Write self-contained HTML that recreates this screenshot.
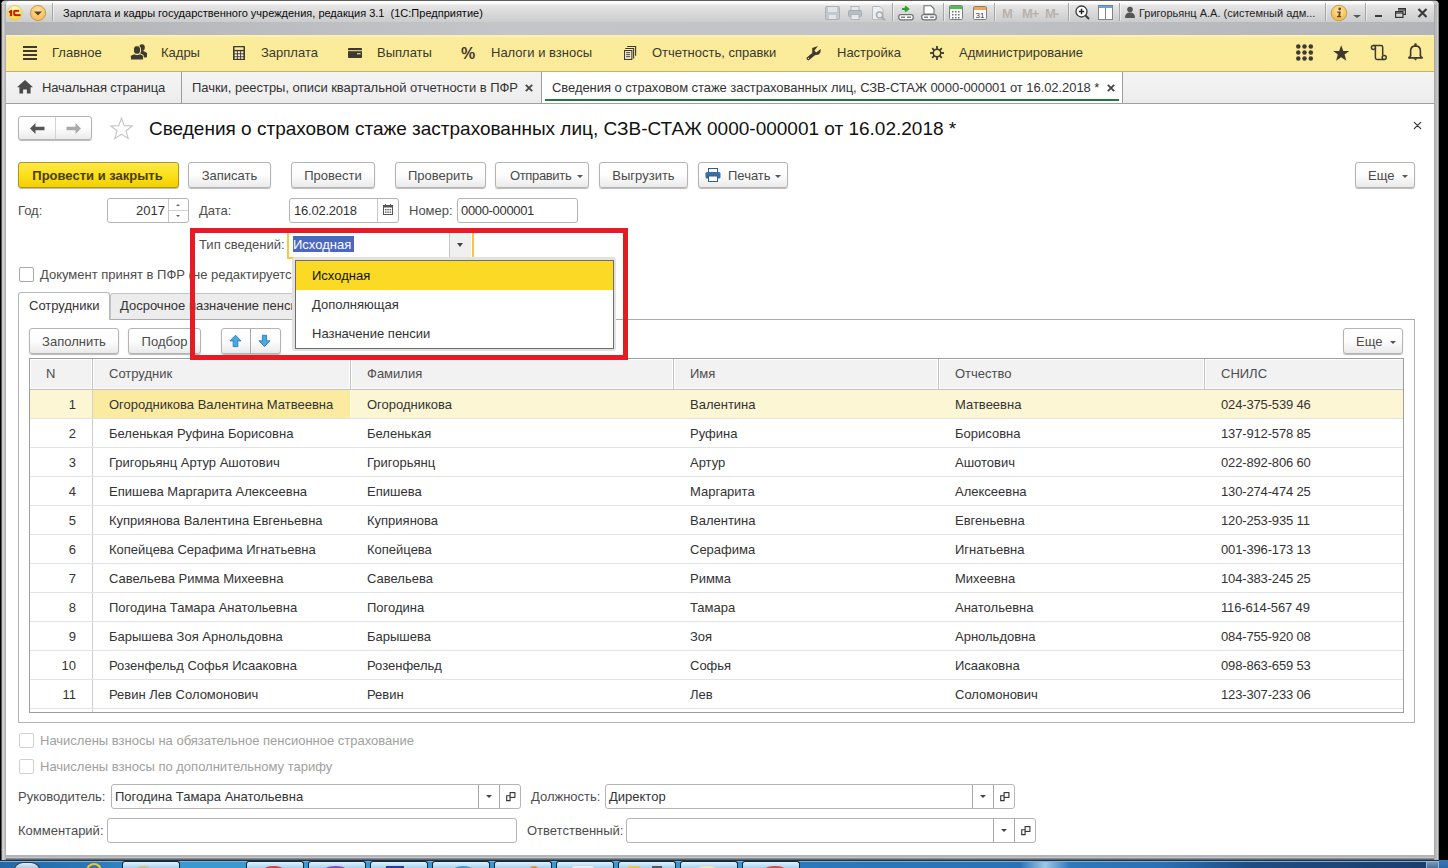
<!DOCTYPE html>
<html><head><meta charset="utf-8">
<style>
*{box-sizing:border-box;margin:0;padding:0}
html,body{width:1448px;height:868px;overflow:hidden;background:#000;font-family:"Liberation Sans",sans-serif;font-size:13px;color:#333}
.a{position:absolute}
#win{position:absolute;left:1px;top:0;width:1438px;height:860px;background:linear-gradient(#5e5e5e 0,#5e5e5e 1px,#c9cbce 1px);border-radius:5px 5px 0 0}
#tb{position:absolute;left:6px;top:1px;width:1428px;height:34px;background:linear-gradient(#fdfdfd 0,#fbfbfb 3px,#e6e6e6 4px,#d6d6d7 14px,#cbcccd 21px,#c6c7c9 22px,#c4c5c8 34px);border-radius:4px 4px 0 0}
#sec{position:absolute;left:6px;top:35px;width:1428px;height:37px;background:linear-gradient(#fcf2b8 0,#fcf2b8 1px,#fbec9c 2px,#faea99 36px);border-bottom:1px solid #c4b25c}
#tabs{position:absolute;left:6px;top:72px;width:1428px;height:32px;background:linear-gradient(#f4f4f4,#eeeeee 26px,#e9e9e9 31px);border-bottom:1px solid #a0a0a0}
#form{position:absolute;left:6px;top:104px;width:1428px;height:751px;background:#fff}
#task{position:absolute;left:0;top:860px;width:1448px;height:8px;background:linear-gradient(#3a78b8,#2a68a8)}
.t{position:absolute;white-space:nowrap;line-height:15px}
.sec{color:#3a3830;top:45px}
.ico{position:absolute}
.sep{position:absolute;top:3px;width:1px;height:18px;background:#a6a6a6;box-shadow:1px 0 0 rgba(255,255,255,.5)}
.tsep{position:absolute;top:72px;width:1px;height:31px;background:#9c9c9c}
.btn{position:absolute;height:26px;border:1px solid #b4b4b4;border-radius:3px;background:linear-gradient(#fff 0,#fdfdfd 50%,#eaeaea 100%);box-shadow:0 1px 1px rgba(0,0,0,.28);color:#4a4a4a;text-align:center;line-height:25px;white-space:nowrap}
.inp{position:absolute;height:25px;border:1px solid #b5b5b5;border-radius:3px;background:#fff;color:#333;line-height:22px;white-space:nowrap}
.lbl{position:absolute;color:#4d4d4d;white-space:nowrap;line-height:15px}
.dd{position:absolute;width:0;height:0;border-left:3px solid transparent;border-right:3px solid transparent;border-top:3px solid #555}
.cb{position:absolute;width:15px;height:15px;border:1px solid #a8a8a8;border-radius:2px;background:#fff}
table{border-collapse:collapse}
</style></head><body>
<div id="win"></div>
<div class="a" style="left:1px;top:4px;width:5px;height:856px;background:linear-gradient(90deg,#5a5a5a 0 1px,#c8c8c8 1px 2px,#d0d0d0 2px 3px,#c0c0c0 3px 4px,#b0b0b0 4px 5px)"></div>
<div class="a" style="left:1434px;top:4px;width:5px;height:856px;background:linear-gradient(90deg,#a9a9a9 0 1px,#b9b9b9 1px 3px,#cbccce 3px 4px,#8a8b8d 4px 5px)"></div>
<div class="a" style="left:6px;top:854px;width:1428px;height:6px;background:linear-gradient(#a0a0a0 0 1px,#b4b4b8 1px 3px,#c8c8cc 3px 4px,#8a8e92 4px 5px,#5a6670 5px 6px)"></div>
<div id="tb"></div>
<div class="a" style="left:6px;top:22px;width:1428px;height:13px;background:linear-gradient(90deg,#b0b2b5 0,#b6b7ba 100px,#c4c5c8 500px,#c2c3c6 900px,#b8b9bc 1250px,#b2b4b7 1428px)"></div>
<div id="sec"></div>
<div id="tabs"></div>
<div id="form"></div>
<div id="task">
<div class="a" style="left:0;top:0;width:1439px;height:1px;background:#1c3248"></div>
<div class="a" style="left:0;top:1px;width:1439px;height:1px;background:#7fb2da"></div>
<div class="a" style="left:0;top:2px;width:1439px;height:6px;background:linear-gradient(90deg,#2468a8 0,#2a78b8 90px,#3a98d0 180px,#3a9ad0 250px,#3a96cf 740px,#2c78bc 800px,#2a72b8 1020px,#9cc8e8 1045px,#2f78bc 1070px,#2a70b6 1160px,#1f4d84 1250px,#1b3d6c 1439px)"></div>
<div class="a" style="left:13px;top:2px;width:28px;height:10px;border-radius:14px 14px 0 0;background:linear-gradient(#e0ecf6,#9ab8d0);border:1px solid #1d3f66"></div>
<div class="a" style="left:86px;top:3px;width:16px;height:8px;border-radius:8px 8px 0 0;border:2px solid #f2c81c;border-bottom:none"></div>
<div class="a" style="left:122px;top:1px;width:58px;height:7px;border:1px solid #14283c;border-bottom:none;border-radius:3px 3px 0 0;background:linear-gradient(#e4f2fb,#a6d2ee)"></div>
<div class="a" style="left:246px;top:1px;width:58px;height:7px;border:1px solid #14283c;border-bottom:none;border-radius:3px 3px 0 0;background:linear-gradient(#e4f2fb,#a6d2ee)"></div>
<div class="a" style="left:308px;top:1px;width:58px;height:7px;border:1px solid #14283c;border-bottom:none;border-radius:3px 3px 0 0;background:linear-gradient(#e4f2fb,#a6d2ee)"></div>
<div class="a" style="left:370px;top:1px;width:58px;height:7px;border:1px solid #14283c;border-bottom:none;border-radius:3px 3px 0 0;background:linear-gradient(#e4f2fb,#a6d2ee)"></div>
<div class="a" style="left:432px;top:1px;width:58px;height:7px;border:1px solid #14283c;border-bottom:none;border-radius:3px 3px 0 0;background:linear-gradient(#e4f2fb,#a6d2ee)"></div>
<div class="a" style="left:494px;top:1px;width:58px;height:7px;border:1px solid #14283c;border-bottom:none;border-radius:3px 3px 0 0;background:linear-gradient(#e4f2fb,#a6d2ee)"></div>
<div class="a" style="left:556px;top:1px;width:58px;height:7px;border:1px solid #14283c;border-bottom:none;border-radius:3px 3px 0 0;background:linear-gradient(#e4f2fb,#a6d2ee)"></div>
<div class="a" style="left:618px;top:1px;width:58px;height:7px;border:1px solid #14283c;border-bottom:none;border-radius:3px 3px 0 0;background:linear-gradient(#e4f2fb,#a6d2ee)"></div>
<div class="a" style="left:680px;top:1px;width:58px;height:7px;border:1px solid #14283c;border-bottom:none;border-radius:3px 3px 0 0;background:linear-gradient(#e4f2fb,#a6d2ee)"></div>
<div class="a" style="left:742px;top:1px;width:58px;height:7px;border:1px solid #14283c;border-bottom:none;border-radius:3px 3px 0 0;background:linear-gradient(#e4f2fb,#a6d2ee)"></div>
<div class="a" style="left:137px;top:6px;width:13px;height:5px;background:#d4c27a;border-radius:50% 50% 0 0"></div>
<div class="a" style="left:265px;top:6px;width:17px;height:5px;background:#e03a30;border-radius:50% 50% 0 0"></div>
<div class="a" style="left:326px;top:6px;width:19px;height:5px;background:#8a48c8;border-radius:50% 50% 0 0"></div>
<div class="a" style="left:386px;top:6px;width:18px;height:5px;background:#2838a8;border-radius:0"></div>
<div class="a" style="left:455px;top:6px;width:16px;height:5px;background:#3a98d8;border-radius:50% 50% 0 0"></div>
<div class="a" style="left:530px;top:6px;width:8px;height:5px;background:#e89030;border-radius:50% 50% 0 0"></div>
<div class="a" style="left:572px;top:6px;width:22px;height:5px;background:#e8eef4;border-radius:3px 3px 0 0"></div>
<div class="a" style="left:628px;top:6px;width:12px;height:5px;background:#e8c850;border-radius:0"></div>
<div class="a" style="left:652px;top:6px;width:10px;height:5px;background:#505860;border-radius:0"></div>
<div class="a" style="left:698px;top:6px;width:18px;height:5px;background:#f2e6b0;border-radius:50% 50% 0 0"></div>
<div class="a" style="left:766px;top:6px;width:18px;height:5px;background:#d84848;border-radius:50% 50% 0 0"></div>
<div class="a" style="left:1426px;top:1px;width:13px;height:7px;border:1px solid #9ab4cc;border-bottom:none;background:linear-gradient(#7a98b8,#4a6e98)"></div>
</div>
<!-- TITLE BAR -->
<div id="titlebar">
<svg class="ico" style="left:6px;top:4px" width="18" height="18" viewBox="0 0 18 18"><defs><radialGradient id="g1" cx="50%" cy="30%" r="65%"><stop offset="0" stop-color="#fffbd0"/><stop offset=".55" stop-color="#fdf07a"/><stop offset="1" stop-color="#f5d820"/></radialGradient></defs><circle cx="8.9" cy="8.8" r="7.4" fill="url(#g1)" stroke="#d8c890" stroke-width=".9"/><path d="M3.0 7.4 L5.0 6.1 H6.0 V11.9 H4.1 V8.3 L3.0 8.7 Z" fill="#d21a08" stroke="#901400" stroke-width=".35"/><path d="M8.8 6.1 H12.2 Q13.1 6.1 13.1 7.0 Q13.1 7.8 12.2 7.8 H9.4 Q8.9 7.8 8.9 8.4 V9.6 Q8.9 10.3 9.5 10.3 H14.3 V11.9 H9.0 Q7.3 11.9 7.3 10.0 V8.0 Q7.3 6.1 8.8 6.1 Z" fill="#d21a08" stroke="#901400" stroke-width=".35"/></svg>
<svg class="ico" style="left:29px;top:4px" width="18" height="18" viewBox="0 0 18 18"><defs><radialGradient id="g2" cx="50%" cy="35%" r="65%"><stop offset="0" stop-color="#ffe3a8"/><stop offset="1" stop-color="#f6b74c"/></radialGradient></defs><circle cx="9" cy="9" r="7.6" fill="url(#g2)" stroke="#c39a58" stroke-width="1"/><path d="M5 7.5 L13 7.5 L9 11.5 Z" fill="#5a4020"/></svg>
<div class="sep" style="left:52px;top:3px;height:18px"></div>
<div class="t" style="left:63px;top:6px;font-size:11px;color:#0a0a0a;line-height:14px">Зарплата и кадры государственного учреждения, редакция 3.1&nbsp;&nbsp;(1С:Предприятие)</div>
<!-- toolbar icons -->
<svg class="ico" style="left:825px;top:6px" width="15" height="14" viewBox="0 0 15 14"><rect x=".5" y=".5" width="14" height="13" rx="1" fill="#c3c8cc" stroke="#aab0b5"/><rect x="3" y="1" width="9" height="5" fill="#e2e5e7"/><rect x="4" y="9" width="7" height="4" fill="#e2e5e7"/></svg>
<svg class="ico" style="left:848px;top:6px" width="14" height="14" viewBox="0 0 14 14"><rect x="3" y=".5" width="8" height="4" fill="#e6e8ea" stroke="#b0b5b9"/><rect x=".5" y="4.5" width="13" height="6" rx="1" fill="#b8bdc1" stroke="#a7acb0"/><rect x="3" y="8.5" width="8" height="5" fill="#e6e8ea" stroke="#b0b5b9"/></svg>
<svg class="ico" style="left:872px;top:6px" width="14" height="15" viewBox="0 0 14 15"><path d="M.5 .5 H8 L11 3.5 V13.5 H.5 Z" fill="#eceeef" stroke="#b5babe"/><circle cx="7.5" cy="9" r="3" fill="none" stroke="#a7acb0" stroke-width="1.5"/><path d="M9.5 11 L13 14.5" stroke="#a7acb0" stroke-width="2"/></svg>
<div class="sep" style="left:892px"></div>
<svg class="ico" style="left:898px;top:5px" width="16" height="16" viewBox="0 0 16 16"><path d="M4 4 H9 M7 1.5 L10 4 L7 6.5" fill="none" stroke="#2da52d" stroke-width="2.2"/><rect x=".8" y="9.6" width="14.4" height="5.2" rx="2" fill="#fff" stroke="#6d7275" stroke-width="1.3"/><rect x="3" y="11.5" width="4" height="1.5" fill="#7d8286"/><rect x="9" y="11.5" width="4" height="1.5" fill="#7d8286"/></svg>
<svg class="ico" style="left:921px;top:5px" width="16" height="16" viewBox="0 0 16 16"><path d="M3 .8 H10 L13 3.8 V9 H3 Z" fill="#fff" stroke="#6d7275" stroke-width="1.1"/><rect x=".8" y="9.6" width="14.4" height="5.2" rx="2" fill="#fff" stroke="#6d7275" stroke-width="1.3"/><rect x="3" y="11.5" width="4" height="1.5" fill="#7d8286"/><rect x="9" y="11.5" width="4" height="1.5" fill="#7d8286"/></svg>
<div class="sep" style="left:943px"></div>
<svg class="ico" style="left:949px;top:5px" width="14" height="15" viewBox="0 0 14 15"><rect x=".5" y=".5" width="13" height="14" rx="1" fill="#fbfbfb" stroke="#7a7f83"/><rect x="1" y="1" width="12" height="3" fill="#4cc04c"/><g fill="#6a6f73"><rect x="3" y="6" width="1.5" height="1.5"/><rect x="6" y="6" width="1.5" height="1.5"/><rect x="9" y="6" width="1.5" height="1.5"/><rect x="3" y="9" width="1.5" height="1.5"/><rect x="6" y="9" width="1.5" height="1.5"/><rect x="9" y="9" width="1.5" height="1.5"/><rect x="3" y="12" width="1.5" height="1.5"/><rect x="6" y="12" width="1.5" height="1.5"/><rect x="9" y="12" width="1.5" height="1.5"/></g></svg>
<svg class="ico" style="left:973px;top:5px" width="14" height="15" viewBox="0 0 14 15"><rect x=".5" y="1.5" width="13" height="13" rx="1" fill="#fbfbfb" stroke="#7a7f83"/><rect x="1" y="2" width="12" height="3" fill="#f0a35a"/><text x="7" y="13" font-size="8" font-family="Liberation Sans" text-anchor="middle" fill="#333">31</text></svg>
<div class="sep" style="left:994px"></div>
<div class="t" style="left:1002px;top:7px;font-size:13px;font-weight:bold;color:#b9b2ac;line-height:14px">M</div>
<div class="t" style="left:1022px;top:7px;font-size:13px;font-weight:bold;color:#b9b2ac;line-height:14px;letter-spacing:-1px">M+</div>
<div class="t" style="left:1045px;top:7px;font-size:13px;font-weight:bold;color:#b9b2ac;line-height:14px;letter-spacing:-1px">M-</div>
<div class="sep" style="left:1068px"></div>
<svg class="ico" style="left:1075px;top:5px" width="15" height="15" viewBox="0 0 15 15"><circle cx="6.5" cy="6.5" r="5.5" fill="#fff" stroke="#3a3a3a" stroke-width="1.3"/><path d="M6.5 3.8 V9.2 M3.8 6.5 H9.2" stroke="#222" stroke-width="1.5"/><path d="M10.5 10.5 L14 14" stroke="#3a3a3a" stroke-width="2"/></svg>
<svg class="ico" style="left:1098px;top:5px" width="15" height="15" viewBox="0 0 15 15"><rect x=".5" y=".5" width="14" height="14" fill="#fff" stroke="#7d8388"/><rect x="1" y="1" width="13" height="2" fill="#62a5e0"/><path d="M7.5 3 V14" stroke="#7d8388"/></svg>
<div class="sep" style="left:1119px"></div>
<svg class="ico" style="left:1125px;top:6px" width="10" height="12" viewBox="0 0 10 12"><circle cx="5" cy="3.5" r="2.8" fill="#555"/><path d="M0 12 Q0 6.5 5 6.5 Q10 6.5 10 12 Z" fill="#555"/></svg>
<div class="t" style="left:1139px;top:6px;font-size:11px;color:#1e1e1e;line-height:14px">Григорьянц А.А. (системный адм...</div>
<div class="sep" style="left:1325px"></div>
<svg class="ico" style="left:1330px;top:4px" width="18" height="18" viewBox="0 0 18 18"><defs><radialGradient id="g3" cx="50%" cy="35%" r="65%"><stop offset="0" stop-color="#ffe8a8"/><stop offset="1" stop-color="#f4b43e"/></radialGradient></defs><circle cx="9" cy="9" r="7.8" fill="url(#g3)" stroke="#c9a050"/><circle cx="9.7" cy="5" r="1.4" fill="#5e4a22"/><path d="M7.2 7.4 H10.8 L10.1 11.9 H11.2 L10.9 13.2 H6.9 L7.2 11.9 H8.3 L8.8 8.7 H7 Z" fill="#5e4a22"/></svg>
<div class="a" style="left:1353px;top:15px;width:0;height:0;border-left:4px solid transparent;border-right:4px solid transparent;border-top:3px solid #555"></div>
<div class="sep" style="left:1365px"></div>
<div class="a" style="left:1375px;top:15px;width:7px;height:2px;background:#3a3a3a"></div>
<svg class="ico" style="left:1395px;top:8px" width="11" height="10" viewBox="0 0 11 10"><path d="M3 .6 H10.4 V6.4 H8" fill="none" stroke="#333" stroke-width="1.2"/><path d="M3 2 H10" stroke="#333" stroke-width="1.2"/><rect x=".6" y="3.6" width="7.4" height="5.8" fill="none" stroke="#333" stroke-width="1.2"/><path d="M1 5 H8" stroke="#333" stroke-width="1.2"/></svg>
<svg class="ico" style="left:1417px;top:8px" width="11" height="10" viewBox="0 0 11 10"><path d="M1.5 1 L9.5 9 M9.5 1 L1.5 9" stroke="#383838" stroke-width="2.1"/></svg>
</div>

<!-- SECTION PANEL -->
<div id="secpanel">
<svg class="ico" style="left:23px;top:46px" width="14" height="14" viewBox="0 0 14 14"><g fill="#3f3a30"><rect y="0" width="14" height="2"/><rect y="4" width="14" height="2"/><rect y="8" width="14" height="2"/><rect y="12" width="14" height="2"/></g></svg>
<div class="t sec" style="left:52px">Главное</div>
<svg class="ico" style="left:130px;top:44px" width="18" height="17" viewBox="0 0 18 17"><g fill="#3f3a30"><ellipse cx="12" cy="3.6" rx="2.8" ry="3.4"/><path d="M10 8 Q10.5 6.8 12 6.8 Q13.5 6.8 14.5 7.6 L17 9 V12.8 Q17 13.6 16 13.6 H10 Z"/><ellipse cx="7" cy="6" rx="3.6" ry="4.3" stroke="#fbed9e" stroke-width="1"/><path d="M1 11.2 L4 9.8 Q5.2 10.6 7 10.6 Q8.8 10.6 10 9.8 L13 11.2 Q13.6 11.6 13.6 12.4 V16 H.4 V12.4 Q.4 11.6 1 11.2 Z" stroke="#fbed9e" stroke-width="1"/></g></svg>
<div class="t sec" style="left:161px">Кадры</div>
<svg class="ico" style="left:233px;top:46px" width="12" height="14" viewBox="0 0 12 14"><rect x="0" y="0" width="12" height="14" rx=".5" fill="#3f3a30"/><rect x="1.5" y="1.3" width="9" height="2.6" fill="#fbed9e"/><g fill="#fff6d0"><rect x="1.6" y="5.3" width="2.3" height="2"/><rect x="4.85" y="5.3" width="2.3" height="2"/><rect x="8.1" y="5.3" width="2.3" height="2"/><rect x="1.6" y="8.3" width="2.3" height="2"/><rect x="4.85" y="8.3" width="2.3" height="2"/><rect x="8.1" y="8.3" width="2.3" height="2"/><rect x="1.6" y="11.2" width="2.3" height="1.6"/><rect x="4.85" y="11.2" width="2.3" height="1.6"/><rect x="8.1" y="11.2" width="2.3" height="1.6"/></g></svg>
<div class="t sec" style="left:261px">Зарплата</div>
<svg class="ico" style="left:348px;top:48px" width="14" height="10" viewBox="0 0 14 10"><rect width="14" height="10" rx=".8" fill="#3f3a30"/><rect y="2.2" width="14" height="1" fill="#fbed9e"/><rect x="9" y="5.2" width="3.6" height="1.1" fill="#fbed9e"/></svg>
<div class="t sec" style="left:377px">Выплаты</div>
<div class="t sec" style="left:461px;top:45px;font-size:16px;font-weight:bold;color:#3f3a30;line-height:17px">%</div>
<div class="t sec" style="left:491px">Налоги и взносы</div>
<svg class="ico" style="left:624px;top:46px" width="13" height="14" viewBox="0 0 13 14"><g fill="none" stroke="#3f3a30" stroke-width="1.1"><path d="M3.2 .55 H11.6 V9.7"/><path d="M1.2 2.55 H9.6 V12.6"/><rect x=".55" y="4.55" width="7.3" height="8.9" fill="#fff8d8"/></g><g fill="#3f3a30"><rect x="2.1" y="6.2" width="4.1" height="1"/><rect x="2.1" y="8.2" width="4.1" height="1"/><rect x="2.1" y="10.2" width="4.1" height="1"/></g></svg>
<div class="t sec" style="left:652px">Отчетность, справки</div>
<svg class="ico" style="left:806px;top:45px" width="15" height="16" viewBox="0 0 15 16"><path d="M.5 12.8 L6.2 8 L6.2 3 L12 1.1 L8.4 5.4 L10.2 7.4 L14.7 4.1 L14.5 7.2 L12.8 9.6 L8.9 10.2 L2.9 15.2 Q.2 15.6 .5 12.8 Z" fill="#3f3a30"/><circle cx="2.4" cy="13.3" r=".6" fill="#fff8d0"/></svg>
<div class="t sec" style="left:837px">Настройка</div>
<svg class="ico" style="left:930px;top:46px" width="14" height="14" viewBox="0 0 14 14"><g transform="translate(7 7)" fill="#3f3a30"><circle r="3.75" fill="none" stroke="#3f3a30" stroke-width="1.5"/><rect x="-.9" y="-7" width="1.8" height="3.6"/><rect x="-.9" y="3.4" width="1.8" height="3.6"/><rect x="-7" y="-.9" width="3.6" height="1.8"/><rect x="3.4" y="-.9" width="3.6" height="1.8"/><g transform="rotate(45)"><rect x="-.9" y="-6.8" width="1.8" height="3.4"/><rect x="-.9" y="3.4" width="1.8" height="3.4"/><rect x="-6.8" y="-.9" width="3.4" height="1.8"/><rect x="3.4" y="-.9" width="3.4" height="1.8"/></g></g></svg>
<div class="t sec" style="left:959px">Администрирование</div>
<svg class="ico" style="left:1295px;top:44px" width="19" height="17" viewBox="0 0 19 17"><g fill="#3f3a30"><circle cx="3.3" cy="2.6" r="2.25"/><circle cx="9.5" cy="2.6" r="2.25"/><circle cx="15.8" cy="2.6" r="2.25"/><circle cx="3.3" cy="8.6" r="2.25"/><circle cx="9.5" cy="8.6" r="2.25"/><circle cx="15.8" cy="8.6" r="2.25"/><circle cx="3.3" cy="14.6" r="2.25"/><circle cx="9.5" cy="14.6" r="2.25"/><circle cx="15.8" cy="14.6" r="2.25"/></g></svg>
<svg class="ico" style="left:1333px;top:45px" width="17" height="16" viewBox="0 0 17 16"><path d="M8.2 .3 L10.3 5.9 L16.2 6 L11.6 9.6 L13.3 15.7 L8.2 12.2 L3.1 15.7 L4.8 9.6 L.2 6 L6.1 5.9 Z" fill="#3f3a30"/></svg>
<svg class="ico" style="left:1370px;top:44px" width="18" height="17" viewBox="0 0 18 17"><g fill="none" stroke="#3f3a30" stroke-width="1.5"><circle cx="3.4" cy="3.4" r="2"/><circle cx="14.2" cy="13.4" r="2"/><path d="M3.4 1.4 H11 Q12.7 1.4 12.7 3.1 V11.4"/><path d="M5.4 3.4 V13.7 Q5.4 15.4 7.1 15.4 H14.2"/></g></svg>
<svg class="ico" style="left:1407px;top:43px" width="17" height="18" viewBox="0 0 17 18"><g fill="none" stroke="#3f3a30" stroke-width="1.6"><path d="M3.6 13.3 V8 Q3.6 3.1 8.5 2.9 Q13.4 3.1 13.4 8 V13.3"/><path d="M1.2 14.8 Q3.6 14 3.6 12.4 M15.8 14.8 Q13.4 14 13.4 12.4 M1.2 14.9 H15.8"/></g><circle cx="8.5" cy="1.6" r="1.3" fill="#3f3a30"/><path d="M6.6 15.4 H10.4 L8.5 17.6 Z" fill="#3f3a30"/></svg>
</div>
<!-- TABS -->
<div id="tabsrow">
<svg class="ico" style="left:17px;top:80px" width="16" height="14" viewBox="0 0 16 14"><path d="M8 0 L16 7.3 H13.6 V13.5 H9.9 V9.5 H6.1 V13.5 H2.4 V7.3 H0 Z" fill="#4a4a4a"/></svg>
<div class="t" style="left:42px;top:80px;color:#333;letter-spacing:-.15px">Начальная страница</div>
<div class="tsep" style="left:181px"></div>
<div class="t" style="left:192px;top:80px;color:#333;letter-spacing:-.04px">Пачки, реестры, описи квартальной отчетности в ПФР</div>
<svg class="ico" style="left:525px;top:84px" width="8" height="8" viewBox="0 0 8 8"><path d="M.8 .8 L7.2 7.2 M7.2 .8 L.8 7.2" stroke="#444" stroke-width="1.8"/></svg>
<div class="tsep" style="left:541px"></div>
<div class="a" style="left:542px;top:72px;width:580px;height:31px;background:#fff"></div>
<div class="t" style="left:552px;top:80px;color:#333;letter-spacing:-.06px">Сведения о страховом стаже застрахованных лиц, СЗВ-СТАЖ 0000-000001 от 16.02.2018 *</div>
<svg class="ico" style="left:1107px;top:84px" width="8" height="8" viewBox="0 0 8 8"><path d="M.8 .8 L7.2 7.2 M7.2 .8 L.8 7.2" stroke="#444" stroke-width="1.8"/></svg>
<div class="a" style="left:545px;top:99px;width:574px;height:2px;background:#1e7a3e"></div>
<div class="tsep" style="left:1122px"></div>
</div>

<!-- FORM -->
<div id="formc">
<!-- nav -->
<div class="btn" style="left:18px;top:116px;width:74px;height:24px"></div>
<div class="a" style="left:55px;top:117px;width:1px;height:22px;background:#d4d4d4"></div>
<svg class="ico" style="left:30px;top:123px" width="15" height="11" viewBox="0 0 15 11"><path d="M0 5.5 L5.5 0 V3.8 H14.5 V7.2 H5.5 V11 Z" fill="#555"/></svg>
<svg class="ico" style="left:66px;top:123px" width="15" height="11" viewBox="0 0 15 11"><path d="M15 5.5 L9.5 0 V3.8 H.5 V7.2 H9.5 V11 Z" fill="#a9a9a9"/></svg>
<svg class="ico" style="left:109px;top:117px" width="25" height="23" viewBox="0 0 25 23"><path d="M12.5 1.2 L15.3 8.6 L23.3 8.9 L17 13.8 L19.2 21.6 L12.5 17.2 L5.8 21.6 L8 13.8 L1.7 8.9 L9.7 8.6 Z" fill="#fff" stroke="#c4c4c4" stroke-width="1.1"/></svg>
<div class="t" style="left:149px;top:118px;font-size:19px;line-height:22px;color:#111">Сведения о страховом стаже застрахованных лиц, СЗВ-СТАЖ 0000-000001 от 16.02.2018 *</div>
<svg class="ico" style="left:1413px;top:121px" width="9" height="9" viewBox="0 0 9 9"><path d="M1.3 1.3 L7.7 7.7 M7.7 1.3 L1.3 7.7" stroke="#333" stroke-width="1.2" stroke-linecap="round"/></svg>

<!-- command bar -->
<div class="btn" style="left:18px;top:162px;width:161px;border-color:#ac961c;background:linear-gradient(#fee84a,#fbe01a 50%,#f3d000);color:#4a3c00;font-weight:bold;padding-right:2px">Провести и закрыть</div>
<div class="btn" style="left:188px;top:162px;width:83px">Записать</div>
<div class="btn" style="left:291px;top:162px;width:84px">Провести</div>
<div class="btn" style="left:395px;top:162px;width:91px">Проверить</div>
<div class="btn" style="left:495px;top:162px;width:94px;text-align:left;padding-left:14px;letter-spacing:-.35px">Отправить</div>
<div class="dd" style="left:577px;top:175px"></div>
<div class="btn" style="left:599px;top:162px;width:89px">Выгрузить</div>
<div class="btn" style="left:698px;top:162px;width:90px;text-align:left;padding-left:29px">Печать</div>
<svg class="ico" style="left:705px;top:168px" width="16" height="14" viewBox="0 0 16 14"><rect x="3.5" y=".5" width="9" height="4" fill="#fff" stroke="#2f5f8f"/><rect x=".5" y="4" width="15" height="6.5" rx="1.5" fill="#3a6ea5"/><rect x="3.5" y="8" width="9" height="5.5" fill="#fff" stroke="#2f5f8f"/></svg>
<div class="dd" style="left:775px;top:175px"></div>
<div class="btn" style="left:1355px;top:162px;width:60px;text-align:left;padding-left:12px">Еще</div>
<div class="dd" style="left:1402px;top:175px"></div>

<!-- fields row -->
<div class="lbl" style="left:18px;top:203px">Год:</div>
<div class="inp" style="left:107px;top:198px;width:82px;height:25px"></div>
<div class="t" style="left:136px;top:203px;color:#333">2017</div>
<div class="a" style="left:168px;top:199px;width:1px;height:23px;background:#c8c8c8"></div>
<div class="a" style="left:169px;top:210px;width:19px;height:1px;background:#d0d0d0"></div>
<div class="a" style="left:176px;top:204px;width:0;height:0;border-left:2px solid transparent;border-right:2px solid transparent;border-bottom:2px solid #666"></div>
<div class="a" style="left:176px;top:215px;width:0;height:0;border-left:2px solid transparent;border-right:2px solid transparent;border-top:2px solid #666"></div>
<div class="lbl" style="left:199px;top:203px">Дата:</div>
<div class="inp" style="left:289px;top:198px;width:110px;height:25px"></div>
<div class="t" style="left:294px;top:203px;color:#333;letter-spacing:-.22px">16.02.2018</div>
<div class="a" style="left:377px;top:199px;width:1px;height:23px;background:#c8c8c8"></div>
<svg class="ico" style="left:383px;top:204px" width="10" height="11" viewBox="0 0 10 11"><rect x=".5" y="1.5" width="9" height="9" fill="none" stroke="#555"/><rect x=".5" y="1.5" width="9" height="2" fill="#555"/><path d="M2.5 0 V2 M7.5 0 V2" stroke="#555"/><g fill="#555"><rect x="2" y="5" width="1.5" height="1.3"/><rect x="4.3" y="5" width="1.5" height="1.3"/><rect x="6.6" y="5" width="1.5" height="1.3"/><rect x="2" y="7.5" width="1.5" height="1.3"/><rect x="4.3" y="7.5" width="1.5" height="1.3"/><rect x="6.6" y="7.5" width="1.5" height="1.3"/></g></svg>
<div class="lbl" style="left:409px;top:203px">Номер:</div>
<div class="inp" style="left:457px;top:198px;width:121px;height:25px"></div>
<div class="t" style="left:461px;top:203px;color:#333;letter-spacing:-.33px">0000-000001</div>

<!-- tip svedeniy -->
<div class="lbl" style="left:199px;top:237px">Тип сведений:</div>
<div class="a" style="left:287px;top:233px;width:187px;height:26px;border-left:2px solid #f4c842;border-right:2px solid #f4c842;border-bottom:2px solid #f4c842;background:#fff"></div>
<div class="a" style="left:293px;top:236px;width:61px;height:16px;background:#4c67c2"></div>
<div class="t" style="left:293px;top:237px;color:#fff">Исходная</div>
<div class="a" style="left:449px;top:233px;width:22px;height:24px;background:#f0f0f0;border-left:1px solid #c8c8c8"></div>
<div class="dd" style="left:457px;top:243px;border-left-width:3.5px;border-right-width:3.5px;border-top-width:4px;border-top-color:#444"></div>

<!-- checkbox -->
<div class="cb" style="left:19px;top:267px"></div>
<div class="lbl" style="left:40px;top:267px">Документ принят в ПФР (не редактируется)</div>

<!-- tabs panel -->
<div class="a" style="left:18px;top:319px;width:1397px;height:404px;border:1px solid #b4b4b4;border-top-color:#ababab"></div>
<div class="a" style="left:110px;top:293px;width:205px;height:27px;background:#ececec;border:1px solid #c4c4c4;border-bottom:1px solid #ababab;border-radius:3px 3px 0 0"></div>
<div class="a" style="left:18px;top:292px;width:92px;height:28px;background:#fff;border:1px solid #b8b8b8;border-bottom:none;border-radius:3px 3px 0 0"></div>
<div class="t" style="left:29px;top:298px;color:#333">Сотрудники</div>
<div class="t" style="left:120px;top:298px;color:#333">Досрочное назначение пенсии</div>

<!-- table toolbar -->
<div class="btn" style="left:29px;top:328px;width:90px">Заполнить</div>
<div class="btn" style="left:128px;top:328px;width:73px">Подбор</div>
<div class="btn" style="left:221px;top:328px;width:60px"></div>
<div class="a" style="left:250px;top:328px;width:1px;height:26px;background:#a8a8a8"></div>
<svg class="ico" style="left:229px;top:334px" width="13" height="14" viewBox="0 0 13 14"><path d="M6.5 1.2 L12 6.9 H8.8 V12.6 H4.2 V6.9 H1 Z" fill="#4aa8e0" stroke="#2c7ab4" stroke-width=".9" stroke-linejoin="miter"/></svg>
<svg class="ico" style="left:258px;top:334px" width="13" height="14" viewBox="0 0 13 14"><path d="M6.5 12.6 L12 6.8 H8.6 V1.3 H4.4 V6.8 H1 Z" fill="#4aa8e0" stroke="#2c7ab4" stroke-width=".9" stroke-linejoin="miter"/></svg>
<div class="btn" style="left:1343px;top:328px;width:60px;text-align:left;padding-left:12px">Еще</div>
<div class="dd" style="left:1390px;top:341px"></div>

<!-- bottom -->
<div class="cb" style="left:19px;top:733px;border-color:#d0d0d0"></div>
<div class="lbl" style="left:40px;top:733px;color:#a0a0a0">Начислены взносы на обязательное пенсионное страхование</div>
<div class="cb" style="left:19px;top:759px;border-color:#d0d0d0"></div>
<div class="lbl" style="left:40px;top:759px;color:#a0a0a0">Начислены взносы по дополнительному тарифу</div>
<div class="lbl" style="left:18px;top:789px">Руководитель:</div>
<div class="inp" style="left:111px;top:784px;width:410px;height:25px"></div>
<div class="t" style="left:115px;top:789px;color:#333">Погодина Тамара Анатольевна</div>
<div class="a" style="left:478px;top:785px;width:1px;height:23px;background:#a8a8a8"></div>
<div class="dd" style="left:486px;top:795px;border-top-color:#444"></div>
<div class="a" style="left:499px;top:785px;width:1px;height:23px;background:#a8a8a8"></div>
<svg class="ico" style="left:506px;top:792px" width="10" height="10" viewBox="0 0 10 10"><g fill="none" stroke="#333" stroke-width="1.1"><rect x="4.1" y=".6" width="4.8" height="4.8"/><path d="M4.1 3.8 H.7 V8.6 H4.1 V5.4"/></g></svg>
<div class="lbl" style="left:531px;top:789px">Должность:</div>
<div class="inp" style="left:605px;top:784px;width:410px;height:25px"></div>
<div class="t" style="left:609px;top:789px;color:#333">Директор</div>
<div class="a" style="left:972px;top:785px;width:1px;height:23px;background:#a8a8a8"></div>
<div class="dd" style="left:980px;top:795px;border-top-color:#444"></div>
<div class="a" style="left:993px;top:785px;width:1px;height:23px;background:#a8a8a8"></div>
<svg class="ico" style="left:1000px;top:792px" width="10" height="10" viewBox="0 0 10 10"><g fill="none" stroke="#333" stroke-width="1.1"><rect x="4.1" y=".6" width="4.8" height="4.8"/><path d="M4.1 3.8 H.7 V8.6 H4.1 V5.4"/></g></svg>
<div class="lbl" style="left:18px;top:823px">Комментарий:</div>
<div class="inp" style="left:107px;top:818px;width:410px;height:25px"></div>
<div class="lbl" style="left:527px;top:823px">Ответственный:</div>
<div class="inp" style="left:626px;top:818px;width:410px;height:25px"></div>
<div class="a" style="left:993px;top:819px;width:1px;height:23px;background:#a8a8a8"></div>
<div class="dd" style="left:1001px;top:829px;border-top-color:#444"></div>
<div class="a" style="left:1014px;top:819px;width:1px;height:23px;background:#a8a8a8"></div>
<svg class="ico" style="left:1021px;top:826px" width="10" height="10" viewBox="0 0 10 10"><g fill="none" stroke="#333" stroke-width="1.1"><rect x="4.1" y=".6" width="4.8" height="4.8"/><path d="M4.1 3.8 H.7 V8.6 H4.1 V5.4"/></g></svg>

<!-- table -->
<div id="grid">
<div class="a" style="left:29px;top:358px;width:1375px;height:355px;border:1px solid #9e9e9e;background:#fff"></div>
<div class="a" style="left:30px;top:359px;width:1373px;height:31px;background:#f2f2f2;border-bottom:1px solid #c4c4c4"></div>
<div class="a" style="left:30px;top:390px;width:1373px;height:28px;background:#fcf6d4"></div>
<div class="a" style="left:93px;top:390px;width:257px;height:28px;background:#fbeba0"></div>
<div class="t" style="left:46px;top:366px;color:#4d4d4d">N</div>
<div class="t" style="left:109px;top:366px;color:#4d4d4d">Сотрудник</div>
<div class="t" style="left:367px;top:366px;color:#4d4d4d">Фамилия</div>
<div class="t" style="left:690px;top:366px;color:#4d4d4d">Имя</div>
<div class="t" style="left:955px;top:366px;color:#4d4d4d">Отчество</div>
<div class="t" style="left:1221px;top:366px;color:#4d4d4d">СНИЛС</div>
<div class="a" style="left:30px;top:359px;width:1373px;height:1px;background:#fff"></div>
<div class="a" style="left:30px;top:388px;width:1373px;height:1px;background:#fafafa"></div>
<div class="a" style="left:30px;top:359px;width:1px;height:30px;background:#fff"></div>
<div class="a" style="left:91px;top:359px;width:3px;height:30px;background:#fff"></div>
<div class="a" style="left:92px;top:359px;width:1px;height:30px;background:#c4c4c4"></div>
<div class="a" style="left:349px;top:359px;width:3px;height:30px;background:#fff"></div>
<div class="a" style="left:350px;top:359px;width:1px;height:30px;background:#c4c4c4"></div>
<div class="a" style="left:672px;top:359px;width:3px;height:30px;background:#fff"></div>
<div class="a" style="left:673px;top:359px;width:1px;height:30px;background:#c4c4c4"></div>
<div class="a" style="left:937px;top:359px;width:3px;height:30px;background:#fff"></div>
<div class="a" style="left:938px;top:359px;width:1px;height:30px;background:#c4c4c4"></div>
<div class="a" style="left:1203px;top:359px;width:3px;height:30px;background:#fff"></div>
<div class="a" style="left:1204px;top:359px;width:1px;height:30px;background:#c4c4c4"></div>
<div class="a" style="left:92px;top:389px;width:1px;height:323px;background:#cfcfcf"></div>
<div class="a" style="left:350px;top:390px;width:1px;height:28px;background:#fffbea"></div>
<div class="a" style="left:30px;top:418px;width:1373px;height:1px;background:#e3e3e3"></div>
<div class="a" style="left:30px;top:447px;width:1373px;height:1px;background:#e3e3e3"></div>
<div class="a" style="left:30px;top:476px;width:1373px;height:1px;background:#e3e3e3"></div>
<div class="a" style="left:30px;top:505px;width:1373px;height:1px;background:#e3e3e3"></div>
<div class="a" style="left:30px;top:534px;width:1373px;height:1px;background:#e3e3e3"></div>
<div class="a" style="left:30px;top:563px;width:1373px;height:1px;background:#e3e3e3"></div>
<div class="a" style="left:30px;top:592px;width:1373px;height:1px;background:#e3e3e3"></div>
<div class="a" style="left:30px;top:621px;width:1373px;height:1px;background:#e3e3e3"></div>
<div class="a" style="left:30px;top:650px;width:1373px;height:1px;background:#e3e3e3"></div>
<div class="a" style="left:30px;top:679px;width:1373px;height:1px;background:#e3e3e3"></div>
<div class="a" style="left:30px;top:708px;width:1373px;height:1px;background:#e3e3e3"></div>
<div class="t" style="right:1372px;top:397px;color:#333">1</div>
<div class="t" style="left:109px;top:397px;color:#333">Огородникова Валентина Матвеевна</div>
<div class="t" style="left:367px;top:397px;color:#333">Огородникова</div>
<div class="t" style="left:690px;top:397px;color:#333">Валентина</div>
<div class="t" style="left:955px;top:397px;color:#333">Матвеевна</div>
<div class="t" style="left:1221px;top:397px;color:#333;letter-spacing:-.15px">024-375-539 46</div>
<div class="t" style="right:1372px;top:426px;color:#333">2</div>
<div class="t" style="left:109px;top:426px;color:#333">Беленькая Руфина Борисовна</div>
<div class="t" style="left:367px;top:426px;color:#333">Беленькая</div>
<div class="t" style="left:690px;top:426px;color:#333">Руфина</div>
<div class="t" style="left:955px;top:426px;color:#333">Борисовна</div>
<div class="t" style="left:1221px;top:426px;color:#333;letter-spacing:-.15px">137-912-578 85</div>
<div class="t" style="right:1372px;top:455px;color:#333">3</div>
<div class="t" style="left:109px;top:455px;color:#333">Григорьянц Артур Ашотович</div>
<div class="t" style="left:367px;top:455px;color:#333">Григорьянц</div>
<div class="t" style="left:690px;top:455px;color:#333">Артур</div>
<div class="t" style="left:955px;top:455px;color:#333">Ашотович</div>
<div class="t" style="left:1221px;top:455px;color:#333;letter-spacing:-.15px">022-892-806 60</div>
<div class="t" style="right:1372px;top:484px;color:#333">4</div>
<div class="t" style="left:109px;top:484px;color:#333">Епишева Маргарита Алексеевна</div>
<div class="t" style="left:367px;top:484px;color:#333">Епишева</div>
<div class="t" style="left:690px;top:484px;color:#333">Маргарита</div>
<div class="t" style="left:955px;top:484px;color:#333">Алексеевна</div>
<div class="t" style="left:1221px;top:484px;color:#333;letter-spacing:-.15px">130-274-474 25</div>
<div class="t" style="right:1372px;top:513px;color:#333">5</div>
<div class="t" style="left:109px;top:513px;color:#333">Куприянова Валентина Евгеньевна</div>
<div class="t" style="left:367px;top:513px;color:#333">Куприянова</div>
<div class="t" style="left:690px;top:513px;color:#333">Валентина</div>
<div class="t" style="left:955px;top:513px;color:#333">Евгеньевна</div>
<div class="t" style="left:1221px;top:513px;color:#333;letter-spacing:-.15px">120-253-935 11</div>
<div class="t" style="right:1372px;top:542px;color:#333">6</div>
<div class="t" style="left:109px;top:542px;color:#333">Копейцева Серафима Игнатьевна</div>
<div class="t" style="left:367px;top:542px;color:#333">Копейцева</div>
<div class="t" style="left:690px;top:542px;color:#333">Серафима</div>
<div class="t" style="left:955px;top:542px;color:#333">Игнатьевна</div>
<div class="t" style="left:1221px;top:542px;color:#333;letter-spacing:-.15px">001-396-173 13</div>
<div class="t" style="right:1372px;top:571px;color:#333">7</div>
<div class="t" style="left:109px;top:571px;color:#333">Савельева Римма Михеевна</div>
<div class="t" style="left:367px;top:571px;color:#333">Савельева</div>
<div class="t" style="left:690px;top:571px;color:#333">Римма</div>
<div class="t" style="left:955px;top:571px;color:#333">Михеевна</div>
<div class="t" style="left:1221px;top:571px;color:#333;letter-spacing:-.15px">104-383-245 25</div>
<div class="t" style="right:1372px;top:600px;color:#333">8</div>
<div class="t" style="left:109px;top:600px;color:#333">Погодина Тамара Анатольевна</div>
<div class="t" style="left:367px;top:600px;color:#333">Погодина</div>
<div class="t" style="left:690px;top:600px;color:#333">Тамара</div>
<div class="t" style="left:955px;top:600px;color:#333">Анатольевна</div>
<div class="t" style="left:1221px;top:600px;color:#333;letter-spacing:-.15px">116-614-567 49</div>
<div class="t" style="right:1372px;top:629px;color:#333">9</div>
<div class="t" style="left:109px;top:629px;color:#333">Барышева Зоя Арнольдовна</div>
<div class="t" style="left:367px;top:629px;color:#333">Барышева</div>
<div class="t" style="left:690px;top:629px;color:#333">Зоя</div>
<div class="t" style="left:955px;top:629px;color:#333">Арнольдовна</div>
<div class="t" style="left:1221px;top:629px;color:#333;letter-spacing:-.15px">084-755-920 08</div>
<div class="t" style="right:1372px;top:658px;color:#333">10</div>
<div class="t" style="left:109px;top:658px;color:#333">Розенфельд Софья Исааковна</div>
<div class="t" style="left:367px;top:658px;color:#333">Розенфельд</div>
<div class="t" style="left:690px;top:658px;color:#333">Софья</div>
<div class="t" style="left:955px;top:658px;color:#333">Исааковна</div>
<div class="t" style="left:1221px;top:658px;color:#333;letter-spacing:-.15px">098-863-659 53</div>
<div class="t" style="right:1372px;top:687px;color:#333">11</div>
<div class="t" style="left:109px;top:687px;color:#333">Ревин Лев Соломонович</div>
<div class="t" style="left:367px;top:687px;color:#333">Ревин</div>
<div class="t" style="left:690px;top:687px;color:#333">Лев</div>
<div class="t" style="left:955px;top:687px;color:#333">Соломонович</div>
<div class="t" style="left:1221px;top:687px;color:#333;letter-spacing:-.15px">123-307-233 06</div>
</div>
</div>

<!-- popup -->
<div class="a" style="left:292px;top:257px;width:324px;height:94px;background:#e2e2e2;border-radius:3px"></div>
<div class="a" style="left:295px;top:260px;width:319px;height:89px;background:#fff;border:1px solid #6e6e6e"></div>
<div class="a" style="left:296px;top:261px;width:317px;height:29px;background:#fada24"></div>
<div class="t" style="left:312px;top:268px;color:#111">Исходная</div>
<div class="t" style="left:312px;top:297px;color:#333">Дополняющая</div>
<div class="t" style="left:312px;top:326px;color:#333">Назначение пенсии</div>
<!-- red frame -->
<div class="a" style="left:190px;top:228px;width:438px;height:132px;border:5px solid #e51c24"></div>

</body></html>
